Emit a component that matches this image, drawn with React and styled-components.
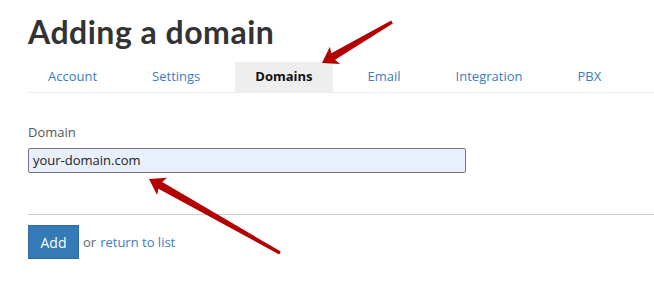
import React from "react";
import styled, { createGlobalStyle } from "styled-components";

const Global = createGlobalStyle`
  html, body { margin: 0; padding: 0; background: #fff; }
  body { font-family: "Open Sans", "Liberation Sans", sans-serif; }
`;

const Page = styled.div`
  position: relative;
  width: 654px;
  height: 304px;
  overflow: hidden;
  padding-left: 28px;
  box-sizing: border-box;
`;

const Title = styled.h1`
  margin: 0;
  padding-top: 12px;
  font-family: Lato, "Open Sans", sans-serif;
  font-size: 32px;
  line-height: 40px;
  font-weight: 700;
  color: #333;
  letter-spacing: 0.5px;
`;

const Tabs = styled.nav`
  display: flex;
  gap: 15px;
  margin-top: 10px;
  border-bottom: 1px solid #eee;
`;

const Tab = styled.a`
  display: block;
  padding: 0 20px;
  height: 30px;
  line-height: 29px;
  font-size: 13px;
  color: ${(p) => (p.$active ? "#111" : "#3a7cc0")};
  font-weight: ${(p) => (p.$active ? 700 : 400)};
  background: ${(p) => (p.$active ? "#eee" : "transparent")};
  text-decoration: none;
`;

const Field = styled.div`
  display: flex;
  flex-direction: column;
  gap: 8px;
  margin-top: 31px;
`;

const Label = styled.label`
  font-size: 13px;
  color: #555;
  line-height: 16px;
`;

const Input = styled.div`
  width: 438px;
  height: 25px;
  box-sizing: border-box;
  border: 1px solid #767676;
  border-radius: 2px;
  background: #e8f0fe;
  padding: 0 4px;
  font-size: 13px;
  line-height: 23px;
  color: #222;
`;

const Divider = styled.hr`
  margin: 41px 0 10px;
  border: 0;
  border-top: 1px solid #ccc;
`;

const Actions = styled.div`
  display: flex;
  align-items: center;
  gap: 4px;
`;

const Button = styled.button`
  background: #337ab7;
  color: #fff;
  border: 1px solid #2e6da4;
  font-family: inherit;
  font-size: 14px;
  width: 51px;
  height: 34px;
  padding: 0;
`;

const Muted = styled.span`
  font-size: 13px;
  color: #666;
`;

const Link = styled.a`
  font-size: 13px;
  color: #3a7cc0;
  text-decoration: none;
`;

const Overlay = styled.svg`
  position: absolute;
  left: 0;
  top: 0;
  pointer-events: none;
`;

function arrowPoints(tip, tail, headLen = 15, headHalf = 10, shaftHalf = 3.8, tailHalf = 1.6) {
  const dx = tail[0] - tip[0];
  const dy = tail[1] - tip[1];
  const len = Math.hypot(dx, dy);
  const u = [dx / len, dy / len];
  const n = [-u[1], u[0]];
  const b = [tip[0] + u[0] * headLen, tip[1] + u[1] * headLen];
  const notch = [tip[0] + u[0] * (headLen - 2), tip[1] + u[1] * (headLen - 2)];
  const pts = [
    tip,
    [b[0] + n[0] * headHalf, b[1] + n[1] * headHalf],
    [notch[0] + n[0] * shaftHalf, notch[1] + n[1] * shaftHalf],
    [tail[0] + n[0] * tailHalf, tail[1] + n[1] * tailHalf],
    [tail[0] - n[0] * tailHalf, tail[1] - n[1] * tailHalf],
    [notch[0] - n[0] * shaftHalf, notch[1] - n[1] * shaftHalf],
    [b[0] - n[0] * headHalf, b[1] - n[1] * headHalf],
  ];
  return pts.map((p) => p.map((v) => v.toFixed(1)).join(",")).join(" ");
}

const tabs = ["Account", "Settings", "Domains", "Email", "Integration", "PBX"];

export default function App() {
  return (
    <Page>
      <Global />
      <Title>Adding a domain</Title>
      <Tabs>
        {tabs.map((t) => (
          <Tab key={t} $active={t === "Domains"}>
            {t}
          </Tab>
        ))}
      </Tabs>
      <Field>
        <Label>Domain</Label>
        <Input>your-domain.com</Input>
      </Field>
      <Divider />
      <Actions>
        <Button>Add</Button>
        <Muted>or</Muted>
        <Link>return to list</Link>
      </Actions>
      <Overlay width="654" height="304" viewBox="0 0 654 304">
        <polygon points={arrowPoints([322, 63], [392, 22])} fill="#b30000" />
        <polygon points={arrowPoints([149, 179], [280, 253])} fill="#b30000" />
      </Overlay>
    </Page>
  );
}
